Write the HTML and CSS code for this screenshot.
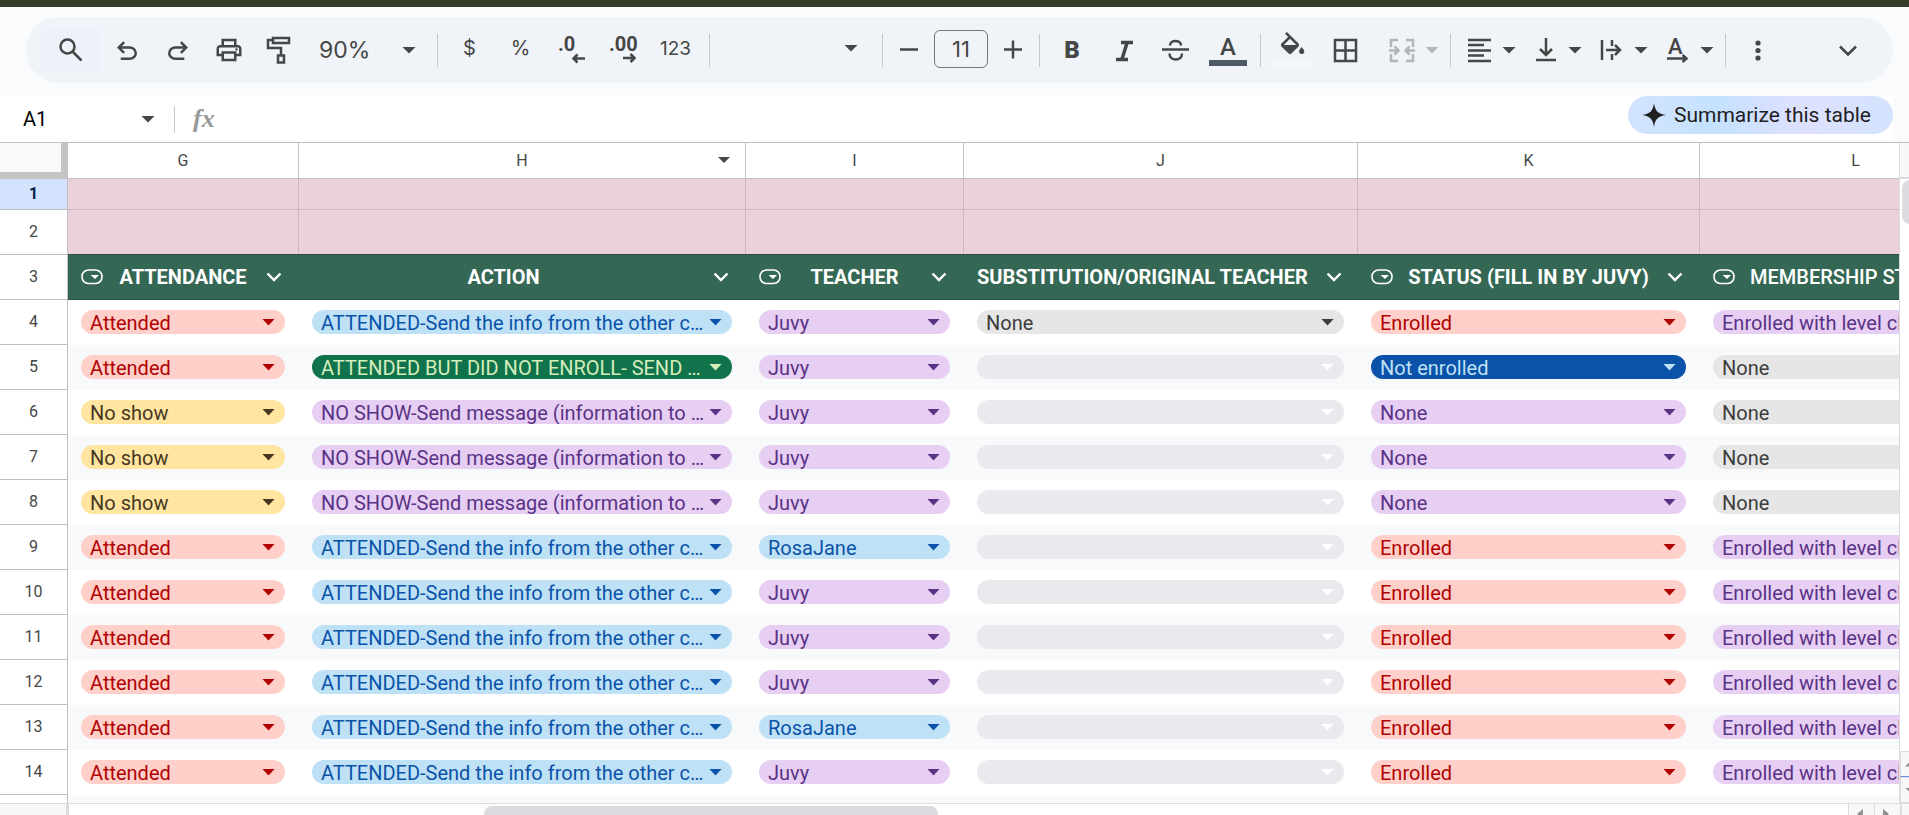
FILE: index.html
```html
<!DOCTYPE html>
<html lang="en">
<head>
    <meta charset="UTF-8">
    <meta name="viewport" content="width=device-width, initial-scale=1.0">
    <title>Attendance sheet</title>
    <link rel="stylesheet" href="styles.css">
</head>
<body>
    <header class="top">
        <div class="toolbar" role="toolbar" aria-label="Main">
            <button class="tool search" aria-label="Search the menus">
                <svg class="icon" viewBox="0 0 30 30"><circle cx="11.500" cy="11.500" r="7" class="line"/><path d="M16.500 16.500L25.500 25.500" class="line"/></svg>
            </button>
            <button class="tool" aria-label="Undo">
                <svg class="icon" viewBox="0 -1 24 24"><path d="M7 19v-2h7.1q1.575 0 2.738-1T18 13.500t-1.163-2.500T14.100 10H7.800l2.600 2.600L9 14 4 9l5-5 1.400 1.400L7.800 8h6.300q2.425 0 4.163 1.575T20 13.500t-1.737 3.925T14.100 19z"/></svg>
            </button>
            <button class="tool" aria-label="Redo">
                <svg class="icon" viewBox="0 -1 24 24"><path transform="matrix(-1 0 0 1 24 0)" d="M7 19v-2h7.1q1.575 0 2.738-1T18 13.500t-1.163-2.500T14.100 10H7.800l2.600 2.600L9 14 4 9l5-5 1.400 1.400L7.800 8h6.300q2.425 0 4.163 1.575T20 13.500t-1.737 3.925T14.100 19z"/></svg>
            </button>
            <button class="tool" aria-label="Print">
                <svg class="icon" viewBox="0 0 24 24"><path d="M16 8V5H8v3H6V3h12v5zM18 12.500q.425 0 .713-.288T19 11.500t-.288-.712T18 10.500t-.712.288T17 11.500t.288.713.712.287M16 19v-4H8v4zm2 2H6v-4H2v-6q0-1.275.875-2.137T5 8h14q1.275 0 2.138.863T22 11v6h-4zm2-6v-4q0-.425-.288-.712T19 10H5q-.425 0-.712.288T4 11v4h2v-2h12v2z"/></svg>
            </button>
            <button class="tool" aria-label="Paint format">
                <svg class="icon" viewBox="0 0 30 30"><path d="M8 3h16v5H8zM8 5H3v8h13v7M13 20.500h6v7h-6z" class="line"/></svg>
            </button>
            <div class="combo zoom">
                <input type="text" value="90%" aria-label="Zoom">
            </div>
            <span class="divider"></span>
            <button class="tool label" aria-label="Format as currency">$</button>
            <button class="tool label" aria-label="Format as percent">%</button>
            <button class="tool" aria-label="Decrease decimal places">
                <svg class="icon" viewBox="0 0 30 30"><text x="1" y="16">.0</text><path d="M28 23.500H17M20.500 19.500l-4 4 4 4" class="line"/></svg>
            </button>
            <button class="tool" aria-label="Increase decimal places">
                <svg class="icon" viewBox="0 0 30 30"><text x="1" y="16">.00</text><path d="M15 23h11M22.500 19l4 4-4 4" class="line"/></svg>
            </button>
            <button class="tool label formats" aria-label="More formats">123</button>
            <span class="divider"></span>
            <button class="combo font" aria-label="Font"></button>
            <span class="divider"></span>
            <button class="tool step" aria-label="Decrease font size">
                <svg class="icon" viewBox="0 0 30 30"><path d="M6 14.500h18" class="line"/></svg>
            </button>
            <input class="size" type="text" value="11" aria-label="Font size">
            <button class="tool step" aria-label="Increase font size">
                <svg class="icon" viewBox="0 0 30 30"><path d="M6 14.500h18M15 5.500v18" class="line"/></svg>
            </button>
            <span class="divider"></span>
            <button class="tool wide bold" aria-label="Bold">B</button>
            <button class="tool wide" aria-label="Italic">
                <svg class="icon" viewBox="0 0 30 30"><path d="M12 7.500h12M7 24.500h12M18 8l-5 16" class="line heavy"/></svg>
            </button>
            <button class="tool wide" aria-label="Strikethrough">
                <svg class="icon" viewBox="0 0 30 30"><path d="M1 14.500h27M9 10.500c0-6 11-6 11 0M8.500 18.500c0 8 12.500 8 12.500 0" class="line"/></svg>
            </button>
            <button class="tool wide" aria-label="Text color">
                <svg class="swatch" viewBox="0 0 38 38"><text x="11" y="24" class="letter">A</text><path d="M0 29h38v6H0z" class="ink"/></svg>
            </button>
            <span class="divider"></span>
            <button class="tool wide" aria-label="Fill color">
                <svg class="swatch" viewBox="0 0 38 38"><path transform="translate(3 1) scale(1.3)" d="M16.560 8.940L7.620 0 6.210 1.410l2.380 2.380-5.150 5.150c-.59.59-.59 1.540 0 2.120l5.500 5.500c.29.29.68.44 1.060.44s.77-.15 1.060-.44l5.500-5.500c.59-.58.59-1.530 0-2.120zM5.210 10L10 5.210 14.790 10H5.210zM19 11.500s-2 2.170-2 3.500c0 1.100.9 2 2 2s2-.9 2-2c0-1.330-2-3.500-2-3.500z"/><path d="M0 29h38v6H0z" class="paper"/></svg>
            </button>
            <button class="tool wide" aria-label="Borders">
                <svg class="icon" viewBox="0 0 30 30"><path d="M5 5h21v21H5zM15.500 5v21M5 15.500h21" class="line"/></svg>
            </button>
            <button class="split merge" aria-label="Merge cells" disabled>
                <svg class="icon" viewBox="0 0 30 30"><path d="M11 5H4v7M11 26H4v-7M19 5h7v7M19 26h7v-7M2 15.500h9M7.500 11.500l4 4-4 4M28 15.500h-9M22.500 11.500l-4 4 4 4" class="line"/></svg>
            </button>
            <span class="divider"></span>
            <button class="split" aria-label="Horizontal align">
                <svg class="icon" viewBox="0 0 30 30"><path d="M4 5h23M4 10h16M4 15.500h23M4 20.500h16M4 26h23" class="line"/></svg>
            </button>
            <button class="split" aria-label="Vertical align">
                <svg class="icon" viewBox="0 0 30 30"><path d="M6 25h20M16 3v16M10 14l6 6 6-6" class="line"/></svg>
            </button>
            <button class="split" aria-label="Text wrapping">
                <svg class="icon" viewBox="0 0 30 30"><path d="M6 5v20M16 5v6M16 19v6M10 15h14M19 10l5 5-5 5" class="line"/></svg>
            </button>
            <button class="split" aria-label="Text rotation">
                <svg class="icon" viewBox="0 0 30 30"><text x="6" y="19" class="letter small">A</text><path d="M5 23.500h19M20.500 20l4 3.500-4 3.500" class="line"/></svg>
            </button>
            <span class="divider"></span>
            <button class="tool" aria-label="More">
                <svg class="icon" viewBox="0 0 30 30"><circle cx="15" cy="8" r="2.600"/><circle cx="15" cy="15.500" r="2.600"/><circle cx="15" cy="23" r="2.600"/></svg>
            </button>
            <button class="tool collapse" aria-label="Hide the menus">
                <svg class="icon" viewBox="0 0 30 30"><path d="M7 11.500l8 8 8-8" class="line"/></svg>
            </button>
        </div>
    </header>

    <div class="formula-bar">
        <div class="combo name-box">
            <input type="text" value="A1" aria-label="Name box">
        </div>
        <span class="divider"></span>
        <label class="fx" for="formula">fx</label>
        <input class="formula" type="text" id="formula">
        <button class="summarize">
            <svg class="spark" viewBox="0 0 24 24"><path d="M12 0c1 8 4 11 12 12-8 1-11 4-12 12-1-8-4-11-12-12 8-1 11-4 12-12z"/></svg>
            Summarize this table
        </button>
        <span class="edge"></span>
    </div>

    <main class="sheet">
        <div class="grid">
            <table>
                <colgroup>
                    <col class="col-num"><col class="col-g"><col class="col-h"><col class="col-i"><col class="col-j"><col class="col-k"><col class="col-l">
                </colgroup>
                <thead>
                    <tr class="letters">
                        <td class="corner"></td>
                        <th>G</th>
                        <th class="has-menu">H</th>
                        <th>I</th>
                        <th>J</th>
                        <th>K</th>
                        <th>L</th>
                    </tr>
                </thead>
                <tbody id="rows">
                    <tr class="pink short"><th class="current">1</th><td></td><td></td><td></td><td></td><td></td><td></td></tr>
                    <tr class="pink"><th>2</th><td></td><td></td><td></td><td></td><td></td><td></td></tr>
                </tbody>
            </table>
        </div>
        <div class="v-scroll">
            <span class="v-cap"></span>
            <span class="v-thumb"></span>
            <button class="v-arrow up" aria-label="Scroll up"></button>
            <button class="v-arrow down" aria-label="Scroll down"></button>
        </div>
    </main>

    <footer class="h-scroll">
        <span class="h-cap"></span>
        <span class="h-track"><span class="h-thumb"></span></span>
        <button class="h-arrow left" aria-label="Scroll left"></button>
        <button class="h-arrow right" aria-label="Scroll right"></button>
        <span class="h-end"></span>
    </footer>

    <script src="script.js"></script>
</body>
</html>
```
FILE: styles.css
```css
* {
    box-sizing: border-box;
    margin: 0;
    padding: 0;
}

body {
    display: flex;
    flex-direction: column;
    height: 100vh;
    overflow: hidden;
    background: #fff;
    color: #444746;
    font-family: Roboto, "Liberation Sans", sans-serif;
    font-size: 20px;
}

button,
input,
select {
    border: none;
    background: none;
    color: inherit;
    font: inherit;
    outline: none;
    min-width: 0;
}

button {
    cursor: pointer;
}

/* toolbar */
.top {
    flex: none;
    border-top: 7px solid #343d2c;
    background: #f9fbfd;
    padding: 10px 16px 13px 26px;
}

.toolbar {
    display: flex;
    align-items: center;
    height: 66px;
    padding: 0 20px 0 15px;
    border-radius: 33px;
    background: #f0f3f8;
}

.tool,
.split {
    display: flex;
    flex: none;
    align-items: center;
    justify-content: center;
    width: 51px;
    height: 46px;
}

.tool.search {
    width: 60px;
    border-radius: 4px;
    background: #edf1fa;
}

.tool.wide {
    width: 52px;
}

.tool.step {
    width: 40px;
}

.tool.formats {
    width: 55px;
}

.tool.collapse {
    margin-left: auto;
}

.label {
    font-family: Inter, "Liberation Sans", sans-serif;
    font-size: 20px;
}

.tool.label {
    padding-bottom: 4px;
}

.tool.formats {
    font-size: 19px;
}

.bold {
    font-size: 24px;
    font-weight: 900;
}

.icon {
    width: 30px;
    height: 30px;
    overflow: visible;
    fill: currentColor;
    font-size: 20px;
    font-weight: 700;
}

.swatch {
    width: 38px;
    height: 38px;
    overflow: visible;
    fill: currentColor;
}

.line {
    fill: none;
    stroke: currentColor;
    stroke-width: 2.5;
}

.heavy {
    stroke-width: 3.5;
}

.letter {
    font-size: 24px;
    font-weight: 500;
}

.letter.small {
    font-size: 22px;
}

.ink {
    fill: #505a66;
}

.paper {
    fill: #f5f8fb;
}

.divider {
    flex: none;
    width: 1px;
    height: 33px;
    margin: 0 6px;
    background: #c7c7c7;
}

.combo {
    display: flex;
    align-items: center;
    justify-content: space-between;
}

.combo::after,
.split::after {
    content: "";
    flex: none;
    width: 14px;
    height: 7px;
    background: currentColor;
    clip-path: polygon(0 0, 100% 0, 50% 100%);
}

.combo input {
    flex: 1;
    width: 0;
}

.zoom {
    width: 126px;
    padding: 0 15px 0 14px;
    font-family: Inter, "Liberation Sans", sans-serif;
    font-size: 23px;
}

.font {
    width: 160px;
    height: 46px;
    padding: 0 18px 4px 0;
    justify-content: flex-end;
}

.size {
    width: 54px;
    height: 38px;
    margin: 0 5px 2px;
    border: 1px solid #747775;
    border-radius: 6px;
    font-family: Inter, "Liberation Sans", sans-serif;
    font-size: 22px;
    text-align: center;
}

.split {
    width: 66px;
    gap: 8px;
}

.split + .divider {
    margin-left: 4px;
}

.merge {
    margin-left: 9px;
    color: #b3b5b8;
}

/* formula bar */
.formula-bar {
    display: flex;
    flex: none;
    align-items: center;
    height: 47px;
    border-bottom: 1px solid #c0c0c0;
}

.name-box {
    width: 168px;
    padding: 0 13px 0 23px;
}

.name-box input {
    color: #000;
}

.formula-bar .divider {
    height: 27px;
}

.fx {
    padding: 0 12px;
    color: #999;
    font-family: "Liberation Serif", serif;
    font-size: 26px;
    font-style: italic;
    font-weight: 700;
}

.formula {
    flex: 1;
    height: 40px;
}

.summarize {
    display: flex;
    flex: none;
    align-items: center;
    align-self: flex-start;
    gap: 8px;
    height: 38px;
    padding: 0 22px 0 14px;
    border-radius: 19px;
    background: linear-gradient(90deg, #d3e3fd, #c4e2ff 33%, #dbe0ff 60%, #dde1ff 70%, #d3e3fd);
    color: #1f1f1f;
    font-size: 21px;
}

.spark {
    width: 24px;
    height: 24px;
    fill: currentColor;
}

.edge {
    align-self: stretch;
    width: 16px;
    background: #f9fbfd;
}

/* sheet */
.sheet {
    display: flex;
    flex: 1;
    min-height: 0;
}

.grid {
    flex: 1;
    min-width: 0;
    overflow: hidden;
    border-right: 1px solid #dadce0;
}

table {
    width: 2012px;
    table-layout: fixed;
    border-collapse: separate;
    border-spacing: 0;
}

.col-num { width: 68px; }
.col-g { width: 231px; }
.col-h { width: 447px; }
.col-i { width: 218px; }
.col-j { width: 394px; }
.col-k { width: 342px; }
.col-l { width: 312px; }

tr {
    height: 45px;
}

.short {
    height: 31px;
}

.letters {
    height: 36px;
}

.letters th,
tbody th {
    padding-bottom: 1px;
    border-right: 1px solid #c0c0c0;
    border-bottom: 1px solid #c0c0c0;
    font-size: 16px;
    font-weight: 400;
}

.corner {
    border-right: 7px solid #c4c4c4;
    border-bottom: 7px solid #c4c4c4;
    background: #f8f9fa;
}

.has-menu {
    position: relative;
}

.has-menu::after {
    content: "";
    position: absolute;
    top: 14px;
    right: 15px;
    width: 12px;
    height: 6px;
    background: currentColor;
    clip-path: polygon(0 0, 100% 0, 50% 100%);
}

tbody th.current {
    background: #d3e3fd;
    color: #041e49;
    font-weight: 700;
}

.pink td {
    border-right: 1px solid #cdb8c2;
    background: #ead1dc;
}

.pink.short td {
    border-bottom: 1px solid #cdb8c2;
}

.titles td {
    border-bottom: 1px solid #284e3f;
    background: #356854;
    color: #fff;
    font-weight: 700;
}

/* the green band overlaps the line above it */
.pink + .titles td {
    box-shadow: 0 -1px 0 #284e3f;
}

.title {
    display: flex;
    align-items: center;
    padding: 0 17px 0 13px;
    white-space: nowrap;
}

.title span {
    flex: 1;
    text-align: center;
}

.title .light {
    font-weight: 500;
    text-align: left;
}

.kind {
    flex: none;
    width: 22px;
    height: 16px;
    margin-right: 15px;
}

.chevron {
    flex: none;
    width: 16px;
    height: 12px;
    margin-left: 18px;
}

.band td {
    background: #f8f9fa;
}

.chip {
    display: grid;
    align-items: center;
    height: 24px;
    margin: 0 14px 1px 13px;
    border-radius: 12px;
}

.chip select,
.chip::after {
    grid-area: 1 / 1;
}

.chip select {
    appearance: none;
    width: 100%;
    height: 24px;
    padding: 2px 28px 0 9px;
    line-height: 22px;
    cursor: pointer;
}

.chip::after {
    content: "";
    justify-self: end;
    width: 13px;
    height: 7px;
    margin-right: 10px;
    background: currentColor;
    clip-path: polygon(0 0, 100% 0, 50% 100%);
    pointer-events: none;
}

.red { background: #ffcfc9; color: #b10202; }
.yellow { background: #ffe5a0; color: #473822; }
.blue { background: #bfe1f6; color: #0a53a8; }
.purple { background: #e6cff2; color: #5a3286; }
.gray { background: #e6e6e6; color: #3d3d3d; }
.green { background: #11734b; color: #d4edbc; }
.navy { background: #0a53a8; color: #bfe1f6; }
.blank { background: #e8eaed; color: #fff; }

/* scrollbars */
.v-scroll {
    display: flex;
    flex: none;
    flex-direction: column;
    width: 9px;
    overflow: hidden;
}

.v-cap {
    height: 36px;
    border-bottom: 2px solid #dadce0;
    background: #f8f8f8;
}

.v-thumb {
    width: 16px;
    height: 44px;
    margin: 1px 0 auto 2px;
    border-radius: 8px;
    background: #dadce0;
}

.v-arrow {
    display: flex;
    flex: none;
    align-items: center;
    height: 26px;
    padding-left: 4px;
    border: 1px solid #dadce0;
    border-right: none;
    background: #f8f8f8;
    color: #8f8f8f;
}

.v-arrow.up {
    border-bottom-color: #6f8fe8;
}

.v-arrow::after {
    content: "";
    flex: none;
    width: 10px;
    height: 5px;
    background: currentColor;
}

.up::after { clip-path: polygon(50% 0, 100% 100%, 0 100%); }
.down::after { clip-path: polygon(0 0, 100% 0, 50% 100%); }

.h-scroll {
    display: flex;
    flex: none;
    height: 12px;
    overflow: hidden;
    border-top: 1px solid #dadce0;
}

.h-cap {
    width: 69px;
    border-right: 3px solid #dadce0;
    background: #f8f8f8;
}

.h-track {
    flex: 1;
    padding: 2px 0 0 415px;
}

.h-thumb {
    display: block;
    width: 454px;
    height: 16px;
    border-radius: 8px;
    background: #dadce0;
}

.h-arrow {
    display: flex;
    width: 26px;
    height: 24px;
    padding: 5px 8px;
    border-left: 1px solid #dadce0;
    background: #f8f8f8;
    color: #8f8f8f;
}

.h-arrow::after {
    content: "";
    flex: none;
    width: 6px;
    height: 10px;
    background: currentColor;
}

.left::after { clip-path: polygon(100% 0, 100% 100%, 0 50%); }
.right::after { clip-path: polygon(0 0, 100% 50%, 0 100%); }

.h-end {
    width: 9px;
    border-left: 2px solid #dadce0;
    background: #f8f8f8;
}
```
FILE: script.js
```javascript
const KIND_ICON = '<svg class="kind" viewBox="0 0 22 16"><rect x="1" y="1" width="20" height="13.500" rx="6.500" fill="none" stroke="#fff" stroke-width="1.600"/><path d="M9.500 6h8.500l-4 4z" fill="#fff"/></svg>';
const CHEVRON = '<svg class="chevron" viewBox="0 0 16 12"><path d="M1.500 2.500L8 9l6.500-6.500" fill="none" stroke="#fff" stroke-width="2.400"/></svg>';

const titles = [
    { text: 'ATTENDANCE', kind: true },
    { text: 'ACTION' },
    { text: 'TEACHER', kind: true },
    { text: 'SUBSTITUTION/ORIGINAL TEACHER' },
    { text: 'STATUS (FILL IN BY JUVY)', kind: true },
    { text: 'MEMBERSHIP ST', kind: true, light: true }
];

const names = ['Attendance', 'Action', 'Teacher', 'Substitution', 'Status', 'Membership'];

const attended = ['red', 'Attended'];
const noShow = ['yellow', 'No show'];
const sendInfo = ['blue', 'ATTENDED-Send the info from the other c…'];
const notEnroll = ['green', 'ATTENDED BUT DID NOT ENROLL- SEND …'];
const sendMessage = ['purple', 'NO SHOW-Send message (information to …'];
const juvy = ['purple', 'Juvy'];
const rosa = ['blue', 'RosaJane'];
const blank = ['blank', ''];
const none = ['gray', 'None'];
const enrolled = ['red', 'Enrolled'];
const level = ['purple', 'Enrolled with level cl'];

const rows = [
    [attended, sendInfo, juvy, none, enrolled, level],
    [attended, notEnroll, juvy, blank, ['navy', 'Not enrolled'], none],
    [noShow, sendMessage, juvy, blank, ['purple', 'None'], none],
    [noShow, sendMessage, juvy, blank, ['purple', 'None'], none],
    [noShow, sendMessage, juvy, blank, ['purple', 'None'], none],
    [attended, sendInfo, rosa, blank, enrolled, level],
    [attended, sendInfo, juvy, blank, enrolled, level],
    [attended, sendInfo, juvy, blank, enrolled, level],
    [attended, sendInfo, juvy, blank, enrolled, level],
    [attended, sendInfo, rosa, blank, enrolled, level],
    [attended, sendInfo, juvy, blank, enrolled, level]
];

function titleCell(title) {
    return `<td><div class="title">${title.kind ? KIND_ICON : ''}<span class="${title.light ? 'light' : ''}">${title.text}</span>${CHEVRON}</div></td>`;
}

function chipCell([color, text], i, number) {
    return `<td><div class="chip ${color}"><select aria-label="${names[i]} ${number}"><option>${text}</option></select></div></td>`;
}

let html = `<tr class="titles"><th>3</th>${titles.map(titleCell).join('')}</tr>`;
rows.forEach((row, r) => {
    const number = r + 4;
    html += `<tr class="${r % 2 ? 'band' : ''}"><th>${number}</th>${row.map((chip, i) => chipCell(chip, i, number)).join('')}</tr>`;
});
html += `<tr class="band"><th></th>${'<td></td>'.repeat(6)}</tr>`;

document.getElementById('rows').insertAdjacentHTML('beforeend', html);
```
